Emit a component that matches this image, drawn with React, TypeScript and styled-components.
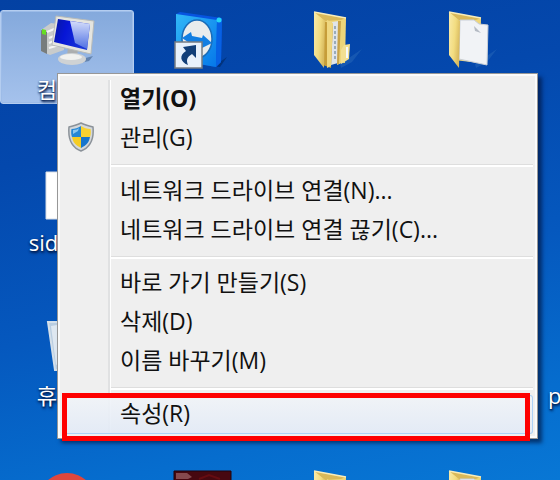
import React from "react";
import styled, { createGlobalStyle, css } from "styled-components";

const GlobalStyle = createGlobalStyle`
  * { box-sizing: border-box; }
  body { margin: 0; }
  button { font: inherit; color: inherit; background: none; border: 0; padding: 0; margin: 0; }
`;

const Desktop = styled.main`
  position: relative;
  height: 100vh;
  overflow: hidden;
  padding-top: 10px;
  font-family: "Open Sans", "Noto Sans CJK KR", sans-serif;
  background: linear-gradient(168deg, #0341a3 0%, #0448ad 28%, #0558be 58%, #066dce 84%, #0877d5 100%);
`;

const IconGrid = styled.div`
  display: grid;
  grid-template-columns: repeat(5, 134px);
  grid-auto-rows: 94px;
  column-gap: 1px;
  row-gap: 59px;
`;

const Tile = styled.button<{ $selected?: boolean; $start?: boolean }>`
  display: flex;
  flex-direction: column;
  align-items: ${(p) => (p.$start ? "flex-start" : "center")};
  gap: 4px;
  padding: ${(p) => (p.$start ? "1px 7px" : "1px 0")};
  border: 1px solid transparent;
  border-radius: 3px;
  ${(p) =>
    p.$selected &&
    css`
      background: linear-gradient(#84a9dc, #a5c2ec);
      border-color: #b4cdf0;
      box-shadow: inset 0 0 0 1px #9dbce8;
    `}
`;

const Picture = styled.svg`
  display: block;
  width: 60px;
  height: 60px;
  flex: none;
  overflow: visible;
`;

const TileLabel = styled.span`
  font-size: 22px;
  line-height: 26px;
  color: #fff;
  white-space: nowrap;
  text-shadow: 1px 2px 3px #001a4a, 0 1px 2px #001a4a;
`;

const Menu = styled.div`
  position: absolute;
  top: 73px;
  left: 57px;
  right: 22px;
  padding: 6px 4px 4px;
  border: 1px solid #979797;
  background: #efefef;
  box-shadow: inset 0 0 0 2px #fbfbfb, 4px 4px 4px rgba(0, 18, 60, 0.65);
  color: #111;
`;

const Gutter = styled.div`
  display: grid;
  grid-template-columns: 47px 1fr;
  background: linear-gradient(90deg, transparent 46px, #e0e1e2 46px, #e0e1e2 48px, #fff 48px, #fff 49px, transparent 49px);
`;

const MenuItem = styled.button<{ $bold?: boolean; $hot?: boolean }>`
  position: relative;
  grid-column: 1 / -1;
  display: grid;
  grid-template-columns: 38px 1fr;
  column-gap: 20px;
  align-items: center;
  height: 39px;
  padding-bottom: 4px;
  text-align: left;
  font-size: 23px;
  line-height: 32px;
  white-space: nowrap;
  font-weight: ${(p) => (p.$bold ? 700 : 400)};
  ${(p) =>
    p.$hot &&
    css`
      border-radius: 3px;
      background: linear-gradient(rgba(241, 244, 248, 0.9), rgba(226, 234, 246, 0.9));
      box-shadow: inset 0 0 0 1px #add1f5;
    `}
`;

const ItemIcon = styled.span`
  display: flex;
  justify-content: center;
`;

const Shield = styled.svg`
  display: block;
  width: 28px;
  height: 30px;
`;

const Separator = styled.hr`
  grid-column: 2;
  width: calc(100% - 2px);
  height: 3px;
  margin: 6px 0 5px 2px;
  border: 0;
  border-top: 1px solid #dedede;
  background: #fff;
`;

const Marker = styled.span`
  position: absolute;
  inset: -2px 3px -7px 0;
  border: 5px solid #fe0000;
  pointer-events: none;
`;

function ComputerIcon() {
  return (
    <Picture viewBox="0 0 60 60" aria-hidden="true">
      <defs>
        <linearGradient id="screen" x1="0" y1="0" x2="1" y2="0.3">
          <stop offset="0" stopColor="#0718a0" />
          <stop offset="0.4" stopColor="#0716d6" />
          <stop offset="1" stopColor="#1b39d8" />
        </linearGradient>
        <linearGradient id="glare" x1="0" y1="0" x2="0" y2="1">
          <stop offset="0" stopColor="#eaf1ff" />
          <stop offset="1" stopColor="#5476e4" />
        </linearGradient>
      </defs>
      <path d="M4 18 14 11 27 13 27 38 13 43 4 39Z" fill="#c9cbcb" />
      <path d="M4 18 10 20 10 42 4 39Z" fill="#777c7d" />
      <path d="M10 20 22 15M12 26 22 22M12 31 22 27M12 36 22 33" stroke="#f5f5f5" strokeWidth="2" />
      <path d="M5 17 9 18 9 23 5 22Z" fill="#65df22" />
      <path d="M45 47 56 44 52 49 43 51Z" fill="#26456c" opacity=".45" />
      <path d="M31 36 41 38 40 44 30 43Z" fill="#acaeaf" />
      <ellipse cx="35" cy="47" rx="14" ry="6" fill="#cfd2d4" />
      <ellipse cx="34" cy="45" rx="11" ry="3" fill="#f1f1ef" />
      <path d="M19 4 57 9 54 42 15 33Z" fill="#e5e5df" stroke="#b8bbb9" strokeWidth="1" />
      <path d="M21 7 53 12 50 38 17 30Z" fill="url(#screen)" />
      <path d="M33 9 53 12 50 37 38 31Z" fill="url(#glare)" opacity=".9" />
    </Picture>
  );
}

function RemoteIcon() {
  return (
    <Picture viewBox="0 0 60 60" aria-hidden="true">
      <defs>
        <linearGradient id="box" x1="0" y1="0" x2="1" y2="1">
          <stop offset="0" stopColor="#31b8f8" />
          <stop offset="1" stopColor="#0577e9" />
        </linearGradient>
      </defs>
      <path d="M42 54 55 45 48 55Z" fill="#02265f" opacity=".6" />
      <path d="M4 2 8 0 50 6 49 50 44 55 4 48Z" fill="#0754e0" />
      <path d="M4 2 45 8 44 55 4 48Z" fill="url(#box)" />
      <path d="M45 8 50 6 49 50 44 55Z" fill="#0761e4" />
      <circle cx="47" cy="8" r="2.500" fill="#24d5f7" />
      <ellipse cx="25" cy="27" rx="15" ry="19" fill="#e9eced" stroke="#1a6cb8" strokeWidth="1.500" />
      <path d="M10 26 19 20 20 24 30 26 31 23 40 31 30 36 30 32 20 30 19 32Z" fill="#127ee2" />
      <path d="M3 30H30V56H3Z" fill="#e8f1fb" stroke="#777c82" strokeWidth="1.500" />
      <path d="M11 35 24 33 24 46 20 42C15 45 14 48 16 53 8 50 7 43 14 39Z" fill="#123f78" />
    </Picture>
  );
}

function FolderIcon({ sheet = false }: { sheet?: boolean }) {
  return (
    <Picture viewBox="2 0 60 60" aria-hidden="true">
      <defs>
        <linearGradient id="cover" x1="0" y1="0" x2="1" y2="0.4">
          <stop offset="0" stopColor="#f9ebaa" />
          <stop offset="0.6" stopColor="#f2dc80" />
          <stop offset="1" stopColor="#d9bb60" />
        </linearGradient>
      </defs>
      <path d="M35 52 57 37 47 50 36 56Z" fill="#3977bf" opacity=".35" />
      <path d="M9 0 41 6 40 51 14 48Z" fill="#eed67a" />
      <path d="M9 0 41 6 36 8 20 9Z" fill="#d9b95a" />
      <path d="M9 0 41 6" stroke="#f8edbb" strokeWidth="1.500" />
      {sheet ? (
        <>
          <path d="M20 8 34 8 39 12 48 13 47 53 19 47Z" fill="#f1f3f6" stroke="#c9cfd7" />
          <path d="M34 14 41 21 35 19Z" fill="#b4bac3" />
          <path d="M9 0 20 9 19 56 9 43Z" fill="url(#cover)" />
        </>
      ) : (
        <>
          <path d="M35 10 40 7 39 50 32 53Z" fill="#edd579" />
          <path d="M27 10 34 9 33 51 26 53Z" fill="#e0e5e9" />
          <path d="M30 14V47" stroke="#9aacba" strokeWidth="2" strokeDasharray="3 2" />
          <path d="M33 9 36 9 34 52 32 52Z" fill="#c8a349" />
          <path d="M39 33 45 32 44 47 36 52 36 38Z" fill="#f3df91" />
          <path d="M42 35V46" stroke="#f6f9fb" strokeWidth="2" />
          <path d="M18 9 28 12 26 56 18 53Z" fill="#c69d39" />
          <path d="M22 8 28 11 26 54 22 56Z" fill="#efd780" />
          <path d="M9 0 20 9 19 56 9 43Z" fill="url(#cover)" />
        </>
      )}
    </Picture>
  );
}

function SheetIcon() {
  return (
    <Picture viewBox="0 0 60 60" aria-hidden="true">
      <path d="M9 7H51V54H9Z" fill="#fff" stroke="#d7dde5" />
    </Picture>
  );
}

function BinIcon() {
  return (
    <Picture viewBox="0 0 60 60" aria-hidden="true">
      <path d="M11 4H49L43 52 18 52Z" fill="#b9cde1" stroke="#d5e0ea" strokeWidth="2" />
      <path d="M14 8 20 7 22 45 19 47Z" fill="#dfe8f1" />
    </Picture>
  );
}

function BallIcon() {
  return (
    <Picture viewBox="0 0 60 60" aria-hidden="true">
      <circle cx="30" cy="31" r="29" fill="#df473d" />
    </Picture>
  );
}

function PosterIcon() {
  return (
    <Picture viewBox="0 0 60 60" aria-hidden="true">
      <path d="M2 0H59V57H2Z" fill="#470810" stroke="#20040c" />
      <path d="M4 2H15L20 6 16 8H4Z" fill="#85494e" />
      <path d="M27 8 37 4 48 8" fill="none" stroke="#650c12" strokeWidth="2" />
    </Picture>
  );
}

function ShieldIcon() {
  return (
    <Shield viewBox="0 0 28 30" aria-hidden="true">
      <path d="M14 1C18 3 22 4 26 5 27 16 24 25 14 29 4 25 1 16 2 5 6 4 10 3 14 1Z" fill="#d4d8db" stroke="#8b9299" strokeWidth="1.500" />
      <path d="M14 4V15H5C4 12 4 10 4.500 7 8 7 11 6 14 4Z" fill="#2587d5" />
      <path d="M14 4C17 6 20 7 23.500 7 24 10 24 12 23 15H14Z" fill="#f8d230" />
      <path d="M5 15H14V26C8 23 6 20 5 15Z" fill="#f5cc23" />
      <path d="M14 15H23C22 20 20 23 14 26Z" fill="#1675cc" />
      <path d="M6 8C9 8 11 7 12 6L11 9 6 12Z" fill="#8cc8f0" />
    </Shield>
  );
}

export default function App() {
  return (
    <>
      <GlobalStyle />
      <Desktop>
        <IconGrid>
          <Tile $selected><ComputerIcon /><TileLabel>컴퓨터</TileLabel></Tile>
          <Tile aria-label="원격"><RemoteIcon /></Tile>
          <Tile aria-label="폴더"><FolderIcon /></Tile>
          <Tile aria-label="폴더"><FolderIcon sheet /></Tile>
          <span />

          <Tile><SheetIcon /><TileLabel>sidebar</TileLabel></Tile>
          <span /><span /><span /><span />

          <Tile><BinIcon /><TileLabel>휴지통</TileLabel></Tile>
          <span /><span /><span />
          <Tile $start><Picture aria-hidden="true" /><TileLabel>p</TileLabel></Tile>

          <Tile aria-label="앱"><BallIcon /></Tile>
          <Tile aria-label="그림"><PosterIcon /></Tile>
          <Tile aria-label="폴더"><FolderIcon /></Tile>
          <Tile aria-label="폴더"><FolderIcon sheet /></Tile>
        </IconGrid>

        <Menu role="menu">
          <Gutter>
            <MenuItem role="menuitem" $bold><ItemIcon />열기(O)</MenuItem>
            <MenuItem role="menuitem"><ItemIcon><ShieldIcon /></ItemIcon>관리(G)</MenuItem>
            <Separator />
            <MenuItem role="menuitem"><ItemIcon />네트워크 드라이브 연결(N)...</MenuItem>
            <MenuItem role="menuitem"><ItemIcon />네트워크 드라이브 연결 끊기(C)...</MenuItem>
            <Separator />
            <MenuItem role="menuitem"><ItemIcon />바로 가기 만들기(S)</MenuItem>
            <MenuItem role="menuitem"><ItemIcon />삭제(D)</MenuItem>
            <MenuItem role="menuitem"><ItemIcon />이름 바꾸기(M)</MenuItem>
            <Separator />
            <MenuItem role="menuitem" $hot><ItemIcon />속성(R)<Marker /></MenuItem>
          </Gutter>
        </Menu>
      </Desktop>
    </>
  );
}
